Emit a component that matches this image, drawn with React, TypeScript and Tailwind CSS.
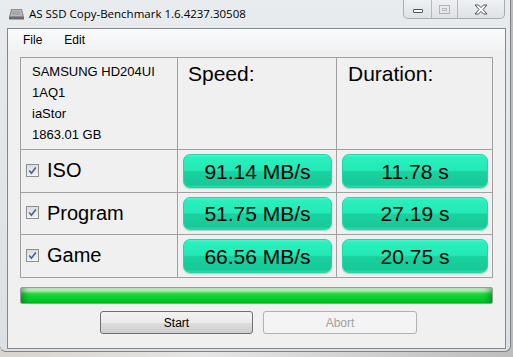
import type { ReactNode } from 'react';

const rows = [
  { name: 'ISO', speed: '91.14 MB/s', duration: '11.78 s' },
  { name: 'Program', speed: '51.75 MB/s', duration: '27.19 s' },
  { name: 'Game', speed: '66.56 MB/s', duration: '20.75 s' },
];

const driveInfo = ['SAMSUNG HD204UI', '1AQ1', 'iaStor', '1863.01 GB'];

function Pill({ children, className }: { children: ReactNode; className: string }) {
  return (
    <div
      className={`flex items-center justify-center rounded-[7px] border border-[#22d7a6] bg-[linear-gradient(to_bottom,#4af7cc_0%,#2af0bd_8%,#22e9b6_48%,#19d2a0_52%,#17c996_92%,#1fdfae_100%)] text-[21px] leading-none text-black shadow-[0_1px_1px_rgba(0,120,90,0.25)] ${className}`}
    >
      {children}
    </div>
  );
}

function CheckBox() {
  return (
    <div className="flex h-[13px] w-[13px] items-center justify-center border border-[#8e8f8f] bg-[linear-gradient(to_bottom,#dcdcdc,#f4f4f4)]">
      <svg width="9" height="9" viewBox="0 0 9 9">
        <path d="M1.2 4.6 L3.4 7.2 L7.8 1.4" fill="none" stroke="#4a5f9a" strokeWidth="1.6" />
      </svg>
    </div>
  );
}

function WindowButtons() {
  return (
    <div className="flex h-[19px] self-start overflow-hidden rounded-b-[5px] border border-t-0 border-[#a9acb0] bg-[linear-gradient(to_bottom,#eef0f2,#dfe2e5)]">
      <div className="flex w-[28px] items-center justify-center border-r border-[#b5b8bc]">
        <div className="mt-[3px] h-[4px] w-[10px] rounded-[1px] border border-[#4c5260] bg-white" />
      </div>
      <div className="flex w-[26px] items-center justify-center border-r border-[#b5b8bc]">
        <div className="flex h-[9px] w-[11px] items-center justify-center border border-[#b0b4b8]">
          <div className="h-[3px] w-[5px] border border-[#b8bcc0]" />
        </div>
      </div>
      <div className="flex w-[46px] items-center justify-center">
        <svg width="14" height="11" viewBox="0 0 14 11">
          <path
            d="M1 1 H4.5 L7 3.6 L9.5 1 H13 L9 5.5 L13 10 H9.5 L7 7.4 L4.5 10 H1 L5 5.5 Z"
            fill="#ffffff"
            stroke="#4c5260"
            strokeWidth="1"
          />
        </svg>
      </div>
    </div>
  );
}

export default function App() {
  return (
    <div className="flex h-[357px] w-[513px] flex-col overflow-hidden bg-[linear-gradient(to_right,#d9d4cb_0%,#e6e6e6_40%,#bdbdbd_100%)] font-['Liberation_Sans',Arial,sans-serif]">
      <div className="flex h-[352px] w-[511px] flex-col rounded-b-[6px] border-r border-b border-[#7d8186] bg-[linear-gradient(to_bottom,#e8ecef,#e2e6ea_40%,#dde0e3)]">
        <header className="flex h-[28px] shrink-0 items-center pl-[8px] pr-[5px]">
          <svg width="17" height="13" viewBox="0 0 17 13" className="mb-[2px]">
            <path d="M3 2 H14 L16 10 H1 Z" fill="#8c8c8c" />
            <path d="M4 3 H13 L14.5 9 H2.5 Z" fill="#b9b9b9" />
            <rect x="1" y="10" width="15" height="2.5" fill="#6a6a6a" />
            <path d="M5 4 V8 M7 4 V8 M9 4 V8 M11 4 V8" stroke="#8a8a8a" strokeWidth="0.8" />
          </svg>
          <span className="ml-[4px] mb-[1px] font-['Open_Sans',sans-serif] text-[11.5px] text-black">
            AS SSD Copy-Benchmark 1.6.4237.30508
          </span>
          <div className="flex-1" />
          <WindowButtons />
        </header>

        <main className="ml-[7px] flex h-[321px] w-[499px] flex-col border border-[#828790] bg-[#f0f0f0]">
          <nav className="flex h-[22px] items-center gap-[22px] bg-[linear-gradient(to_bottom,#fafbfc,#f1f2f4)] pl-[15px] text-[12px] text-black">
            <span>File</span>
            <span>Edit</span>
          </nav>

          <section className="ml-[12px] mt-[6px] grid w-[473px] grid-cols-[157px_159px_156px] grid-rows-[92px_43px_42px_43px] border-t border-l border-[#a0a0a0]">
            <div className="flex flex-col border-r border-b border-[#a0a0a0] pl-[11px] pt-[3px] text-[13px] leading-[21px] text-black">
              {driveInfo.map((line) => (
                <span key={line}>{line}</span>
              ))}
            </div>
            <div className="border-r border-b border-[#a0a0a0] pl-[10px] pt-[5px] text-[21px] leading-none text-black">
              Speed:
            </div>
            <div className="border-r border-b border-[#a0a0a0] pl-[11px] pt-[5px] text-[21px] leading-none text-black">
              Duration:
            </div>

            {rows.map((row) => (
              <div key={row.name} className="contents">
                <div className="flex items-center gap-[8px] border-r border-b border-[#a0a0a0] pb-[2px] pl-[5px]">
                  <CheckBox />
                  <span className="text-[20px] leading-none text-black">{row.name}</span>
                </div>
                <div className="flex border-r border-b border-[#a0a0a0] py-[4px] pl-[5px] pr-[4px]">
                  <Pill className="flex-1">{row.speed}</Pill>
                </div>
                <div className="flex border-r border-b border-[#a0a0a0] py-[4px] pl-[5px] pr-[4px]">
                  <Pill className="flex-1">{row.duration}</Pill>
                </div>
              </div>
            ))}
          </section>

          <div className="ml-[12px] mt-[9px] h-[17px] w-[473px] rounded-[2px] border border-[#9a9a9a] bg-[linear-gradient(to_bottom,#dcf7dc_0%,#b4f0b4_18%,#22da3c_38%,#00d428_60%,#00c524_100%)] shadow-[inset_6px_0_6px_-3px_rgba(0,80,20,0.45),inset_-6px_0_6px_-3px_rgba(0,80,20,0.45)]" />

          <div className="ml-[92px] mt-[7px] flex gap-[10px] text-[12px]">
            <button className="h-[23px] w-[153px] rounded-[3px] border border-[#707070] bg-[linear-gradient(to_bottom,#f2f2f2_0%,#ebebeb_50%,#dddddd_51%,#cfcfcf_100%)] text-black">
              Start
            </button>
            <button className="h-[23px] w-[154px] rounded-[3px] border border-[#adb2b5] bg-[#f4f4f4] text-[#a0a0a0]">
              Abort
            </button>
          </div>
        </main>
      </div>
    </div>
  );
}
